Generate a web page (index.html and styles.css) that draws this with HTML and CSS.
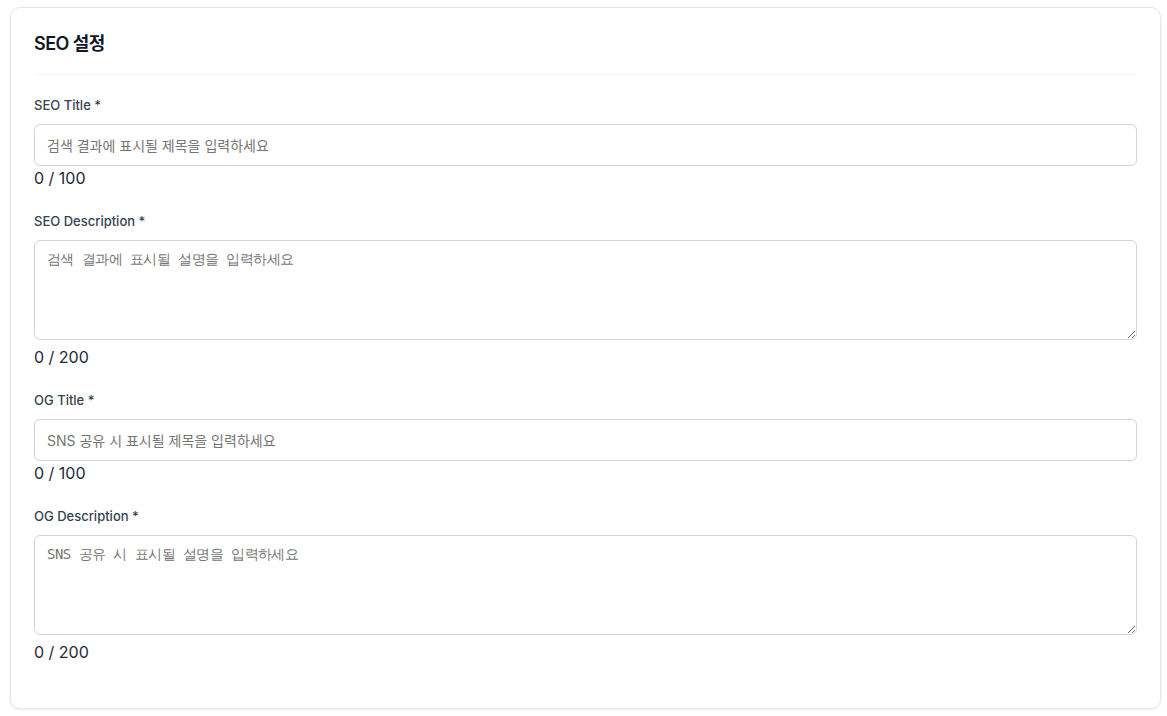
FILE: index.html
```html
<!DOCTYPE html>
<html lang="ko">
<head>
<meta charset="utf-8">
<title>SEO 설정</title>
<link rel="stylesheet" href="styles.css">
</head>
<body>
<div class="page">
  <section class="card">
    <h2 class="card-title">SEO 설정</h2>
    <div class="field">
      <label class="label">SEO Title <span class="req">*</span></label>
      <input class="input" type="text" placeholder="검색 결과에 표시될 제목을 입력하세요">
      <div class="count">0 / 100</div>
    </div>
    <div class="field">
      <label class="label">SEO Description <span class="req">*</span></label>
      <textarea class="textarea" placeholder="검색 결과에 표시될 설명을 입력하세요"></textarea>
      <div class="count">0 / 200</div>
    </div>
    <div class="field">
      <label class="label">OG Title <span class="req">*</span></label>
      <input class="input" type="text" placeholder="SNS 공유 시 표시될 제목을 입력하세요">
      <div class="count">0 / 100</div>
    </div>
    <div class="field">
      <label class="label">OG Description <span class="req">*</span></label>
      <textarea class="textarea" placeholder="SNS 공유 시 표시될 설명을 입력하세요"></textarea>
      <div class="count">0 / 200</div>
    </div>
  </section>
</div>
</body>
</html>
```
FILE: styles.css
```css
* { box-sizing: border-box; }
html, body { margin: 0; background: #ffffff; }
body {
  font-family: Inter, "Noto Sans CJK KR", sans-serif;
  color: #1f2937;
}
.page {
  padding: 7px 6px 6px 10px;
}
.card {
  background: #fff;
  border: 1px solid #e5e7eb;
  border-radius: 10px;
  box-shadow: 0 1px 3px rgba(0,0,0,0.08);
  padding: 24px 23px 24px 23px;
}
.card-title {
  margin: 0;
  font-size: 18px;
  line-height: 24px;
  font-weight: 600;
  letter-spacing: -0.03em;
  color: #111827;
  padding-bottom: 18px;
  border-bottom: 1px solid #f3f4f6;
  margin-bottom: 20px;
}
.field {
  margin-bottom: 21px;
}
.field:last-child {
  margin-bottom: 20px;
}
.label {
  display: block;
  font-size: 13px;
  line-height: 20px;
  font-weight: 500;
  color: #374151;
  margin-bottom: 9px;
}
.req { color: #374151; }
.input {
  display: block;
  width: 100%;
  height: 42px;
  padding: 10px 12px;
  border: 1px solid #d1d5db;
  border-radius: 6px;
  font-family: Inter, "Noto Sans CJK KR", sans-serif;
  font-size: 14px;
  color: #111827;
  outline: none;
}
.input::placeholder, .textarea::placeholder { color: #757575; }
.textarea {
  width: 100%;
  height: 100px;
  padding: 10px 12px;
  border: 1px solid #d1d5db;
  border-radius: 6px;
  font-size: 14px;
  letter-spacing: -0.55px;
  outline: none;
  vertical-align: top;
  margin-bottom: 5px;
}
.count {
  font-size: 16px;
  line-height: 24px;
  color: #1f2937;
}
```
